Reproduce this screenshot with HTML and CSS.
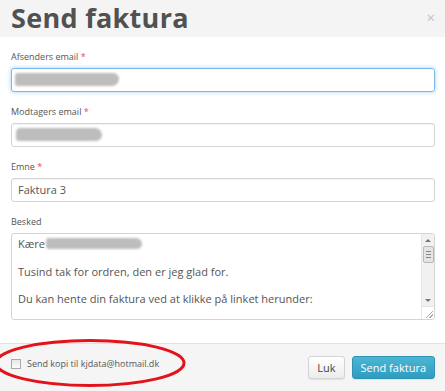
FILE: index.html
```html
<!DOCTYPE html>
<html lang="da">
<head>
  <meta charset="UTF-8" />
  <title>Send faktura</title>
  <link rel="stylesheet" href="styles.css">
</head>
<body>
  <div class="modal">
    <div class="modal-header">
      <h1 class="modal-title">Send faktura</h1>
      <span class="close">&times;</span>
    </div>

    <div class="modal-body">
      <div class="form-group">
        <label class="label">Afsenders email <span class="req">*</span></label>
        <div class="field focus"><span class="smudge smudge-1"></span></div>
      </div>

      <div class="form-group">
        <label class="label">Modtagers email <span class="req">*</span></label>
        <div class="field"><span class="smudge smudge-2"></span></div>
      </div>

      <div class="form-group">
        <label class="label">Emne <span class="req">*</span></label>
        <div class="field">Faktura 3</div>
      </div>

      <div class="form-group">
        <label class="label">Besked</label>
        <div class="textarea">
          <div class="textarea-text">
            <p>Kære<span class="smudge smudge-3"></span></p>
            <p>&nbsp;</p>
            <p>Tusind tak for ordren, den er jeg glad for.</p>
            <p>&nbsp;</p>
            <p>Du kan hente din faktura ved at klikke på linket herunder:</p>
          </div>
          <div class="scrollbar">
            <span class="arrow up"></span>
            <span class="thumb"><i></i><i></i><i></i></span>
            <span class="track"></span>
            <span class="arrow down"></span>
            <span class="grip"></span>
          </div>
        </div>
      </div>
    </div>

    <div class="modal-footer">
      <label class="copy">
        <span class="checkbox"></span>
        Send kopi til kjdata@hotmail.dk
      </label>
      <div class="actions">
        <button class="btn">Luk</button>
        <button class="btn btn-primary">Send faktura</button>
      </div>
      <svg class="ring" width="196" height="54" viewBox="0 0 196 54">
        <ellipse cx="96" cy="25" rx="94" ry="22.5" fill="none" stroke="#e3131b" stroke-width="3" />
      </svg>
    </div>
  </div>
</body>
</html>
```

FILE: styles.css
```css
* {
  box-sizing: border-box;
  margin: 0;
  padding: 0;
}

body {
  font-family: 'Open Sans', sans-serif;
  color: #555;
  background: #fff;
  width: 445px;
  height: 391px;
  overflow: hidden;
}

.modal {
  display: flex;
  flex-direction: column;
  height: 391px;
}

.modal-header {
  flex-shrink: 0;
  display: flex;
  align-items: center;
  justify-content: space-between;
  height: 37px;
  padding: 0 10px 0 11px;
  background: #f4f4f4;
}

.modal-title {
  font-size: 27px;
  font-weight: 700;
  color: #515151;
  letter-spacing: 0.3px;
  line-height: 1;
  margin-top: -3px;
}

.close {
  font-size: 15px;
  color: #c3c3c3;
  margin-top: -4px;
}

.modal-body {
  flex: 1;
  padding: 13px 10px 0 11px;
}

.form-group {
  margin-bottom: 13px;
}

.label {
  display: block;
  font-size: 9px;
  line-height: 14px;
  margin-bottom: 4px;
  color: #555;
}

.req {
  color: #d9534f;
}

.field {
  position: relative;
  height: 24px;
  border: 1px solid #d4d4d4;
  border-radius: 3px;
  padding: 0 6px;
  font-size: 11px;
  line-height: 22px;
  color: #555;
  box-shadow: inset 0 1px 1px rgba(0, 0, 0, 0.05);
}

.field.focus {
  border-color: #79b9ee;
  box-shadow: 0 0 4px rgba(102, 175, 233, 0.6);
}

.smudge {
  position: absolute;
  background: #bdbdbd;
  filter: blur(1.2px);
  border-radius: 6px;
}

.smudge-1 {
  left: 3px;
  top: 4px;
  width: 104px;
  height: 13px;
  border-radius: 4px 8px 10px 3px;
}

.smudge-2 {
  left: 4px;
  top: 4px;
  width: 86px;
  height: 13px;
  border-radius: 6px 10px 8px 4px;
}

.textarea {
  display: flex;
  height: 87px;
  border: 1px solid #d4d4d4;
  border-radius: 3px;
  overflow: hidden;
}

.textarea-text {
  flex: 1;
  padding: 3px 6px;
  font-size: 11px;
  line-height: 13.8px;
  color: #555;
}

.textarea-text p {
  position: relative;
  white-space: nowrap;
}

.smudge-3 {
  left: 28px;
  top: 1px;
  width: 96px;
  height: 11px;
  border-radius: 5px 12px 10px 6px;
}

.scrollbar {
  display: flex;
  flex-direction: column;
  align-items: center;
  width: 13px;
  background: #f1f1f1;
  border-left: 1px solid #e6e6e6;
}

.arrow {
  width: 0;
  height: 0;
  border-left: 3px solid transparent;
  border-right: 3px solid transparent;
  margin: 5px 0 4px;
}

.arrow.up {
  border-bottom: 3px solid #777;
}

.arrow.down {
  border-top: 3px solid #777;
}

.thumb {
  display: flex;
  flex-direction: column;
  align-items: center;
  justify-content: center;
  gap: 2px;
  width: 11px;
  height: 17px;
  background: #e4e4e4;
  border: 1px solid #b8b8b8;
  border-radius: 2px;
}

.thumb i {
  width: 5px;
  height: 1px;
  background: #888;
}

.track {
  flex: 1;
}

.grip {
  align-self: stretch;
  height: 13px;
  background: #fff;
  border-top: 1px solid #e6e6e6;
  position: relative;
}

.grip::after {
  content: "";
  position: absolute;
  right: 1px;
  bottom: 1px;
  width: 7px;
  height: 7px;
  background: linear-gradient(135deg, transparent 45%, #aaa 45%, #aaa 55%, transparent 55%, transparent 70%, #aaa 70%, #aaa 80%, transparent 80%);
}

.modal-footer {
  flex-shrink: 0;
  position: relative;
  display: flex;
  align-items: center;
  justify-content: space-between;
  height: 48px;
  padding: 0 10px 0 11px;
  background: #f5f5f5;
  border-top: 1px solid #e2e2e2;
}

.copy {
  display: flex;
  align-items: center;
  gap: 6px;
  font-size: 9px;
  color: #555;
  margin-top: -8px;
}

.checkbox {
  width: 10px;
  height: 10px;
  border: 1px solid #a9a9a9;
  background: linear-gradient(#e8e8e8, #fafafa);
}

.actions {
  display: flex;
  gap: 7px;
}

.btn {
  font-family: 'Open Sans', sans-serif;
  font-size: 11px;
  height: 23px;
  padding: 0 8px;
  border: 1px solid #d4d4d4;
  border-radius: 3px;
  background: linear-gradient(#ffffff, #ececec);
  color: #444;
  box-shadow: 0 1px 1px rgba(0, 0, 0, 0.08);
}

.btn-primary {
  border-color: #2f94b4;
  background: linear-gradient(#4cb6d4, #2e9dc0);
  color: #fff;
}

.ring {
  position: absolute;
  left: -6px;
  top: -6px;
}
```
